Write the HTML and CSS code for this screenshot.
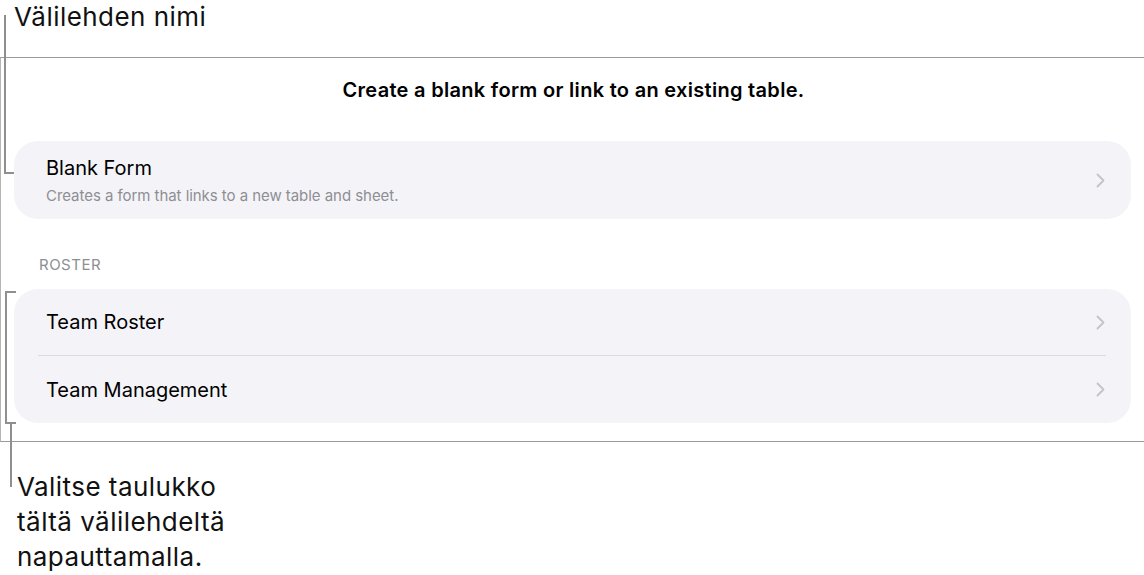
FILE: index.html
```html
<!DOCTYPE html>
<html lang="fi">
<head>
<meta charset="utf-8">
<title>Forms</title>
<link rel="stylesheet" href="styles.css">
</head>
<body>
<div class="page">
  <div class="note note-top">Välilehden nimi</div>
  <section class="sheet">
    <h1 class="sheet-title">Create a blank form or link to an existing table.</h1>
    <div class="group">
      <div class="row row-tall">
        <div class="row-text">
          <div class="row-title">Blank Form</div>
          <div class="row-sub">Creates a form that links to a new table and sheet.</div>
        </div>
        <svg class="chev" width="9" height="15" viewBox="0 0 9 15"><path d="M1.5 1.5 L7.5 7.5 L1.5 13.5" fill="none" stroke="#c4c4c7" stroke-width="1.8" stroke-linecap="round" stroke-linejoin="round"/></svg>
      </div>
    </div>
    <div class="section-label">ROSTER</div>
    <div class="group">
      <div class="row">
        <div class="row-title">Team Roster</div>
        <svg class="chev" width="9" height="15" viewBox="0 0 9 15"><path d="M1.5 1.5 L7.5 7.5 L1.5 13.5" fill="none" stroke="#c4c4c7" stroke-width="1.8" stroke-linecap="round" stroke-linejoin="round"/></svg>
      </div>
      <div class="divider"></div>
      <div class="row row-last">
        <div class="row-title">Team Management</div>
        <svg class="chev" width="9" height="15" viewBox="0 0 9 15"><path d="M1.5 1.5 L7.5 7.5 L1.5 13.5" fill="none" stroke="#c4c4c7" stroke-width="1.8" stroke-linecap="round" stroke-linejoin="round"/></svg>
      </div>
    </div>
  </section>
  <div class="note note-bottom">Valitse taulukko<br>tältä välilehdeltä<br>napauttamalla.</div>

  <div class="callout callout-top"></div>
  <div class="callout callout-bracket"></div>
  <div class="callout callout-stem"></div>
</div>
</body>
</html>
```

FILE: styles.css
```css
* { box-sizing: border-box; margin: 0; padding: 0; }
html, body { background: #ffffff; }
body {
  font-family: Inter, "Noto Sans", sans-serif;
  color: #000;
  width: 1144px;
  height: 575px;
  overflow: hidden;
}
.page {
  position: relative;
  width: 1144px;
  height: 575px;
}
.note {
  font-size: 26px;
  color: #111;
  letter-spacing: 0.45px;
}
.note-top {
  height: 57px;
  line-height: 32px;
  padding-left: 14px;
  padding-top: 1px;
}
.sheet {
  border-top: 1px solid #9a9a9a;
  border-bottom: 1px solid #9a9a9a;
  border-left: 1px solid #b5b5b5;
  padding: 0 13px 18px 13px;
}
.sheet-title {
  font-size: 20px;
  font-weight: 600;
  text-align: center;
  line-height: 24px;
  padding-top: 20px;
  height: 83px;
  letter-spacing: 0.3px;
  padding-left: 2px;
}
.group {
  background: #f4f4f8;
  border-radius: 24px;
  overflow: hidden;
}
.row {
  display: flex;
  align-items: center;
  justify-content: space-between;
  height: 66px;
  padding: 0 26px 0 32px;
}
.row-tall { height: 78px; }
.row-last { height: 67px; }
.row-title {
  font-size: 20px;
  line-height: 24px;
  color: #000;
}
.row-sub {
  font-size: 15px;
  line-height: 18px;
  color: #8e8e93;
  margin-top: 7px;
  letter-spacing: -0.05px;
}
.row-text { margin-top: 0; }
.chev { flex: none; }
.divider {
  height: 1px;
  background: #dcdce0;
  margin: 0 25px 0 24px;
}
.section-label {
  font-size: 15px;
  letter-spacing: 0.5px;
  color: #8e8e93;
  padding-left: 25px;
  height: 70px;
  padding-top: 37px;
  line-height: 18px;
}
.note-bottom {
  padding-left: 17px;
  padding-top: 27px;
  line-height: 35px;
}
.callout { position: absolute; border-color: #8f8f8f; border-style: solid; border-width: 0; }
.callout-top {
  left: 4px;
  top: 15px;
  width: 10px;
  height: 159px;
  border-left-width: 2px;
  border-bottom-width: 2px;
}
.callout-bracket {
  left: 5px;
  top: 291px;
  width: 11px;
  height: 133px;
  border-left-width: 2px;
  border-top-width: 2px;
  border-bottom-width: 2px;
}
.callout-stem {
  left: 10px;
  top: 423px;
  width: 2px;
  height: 64px;
  border-left-width: 2px;
}
```
